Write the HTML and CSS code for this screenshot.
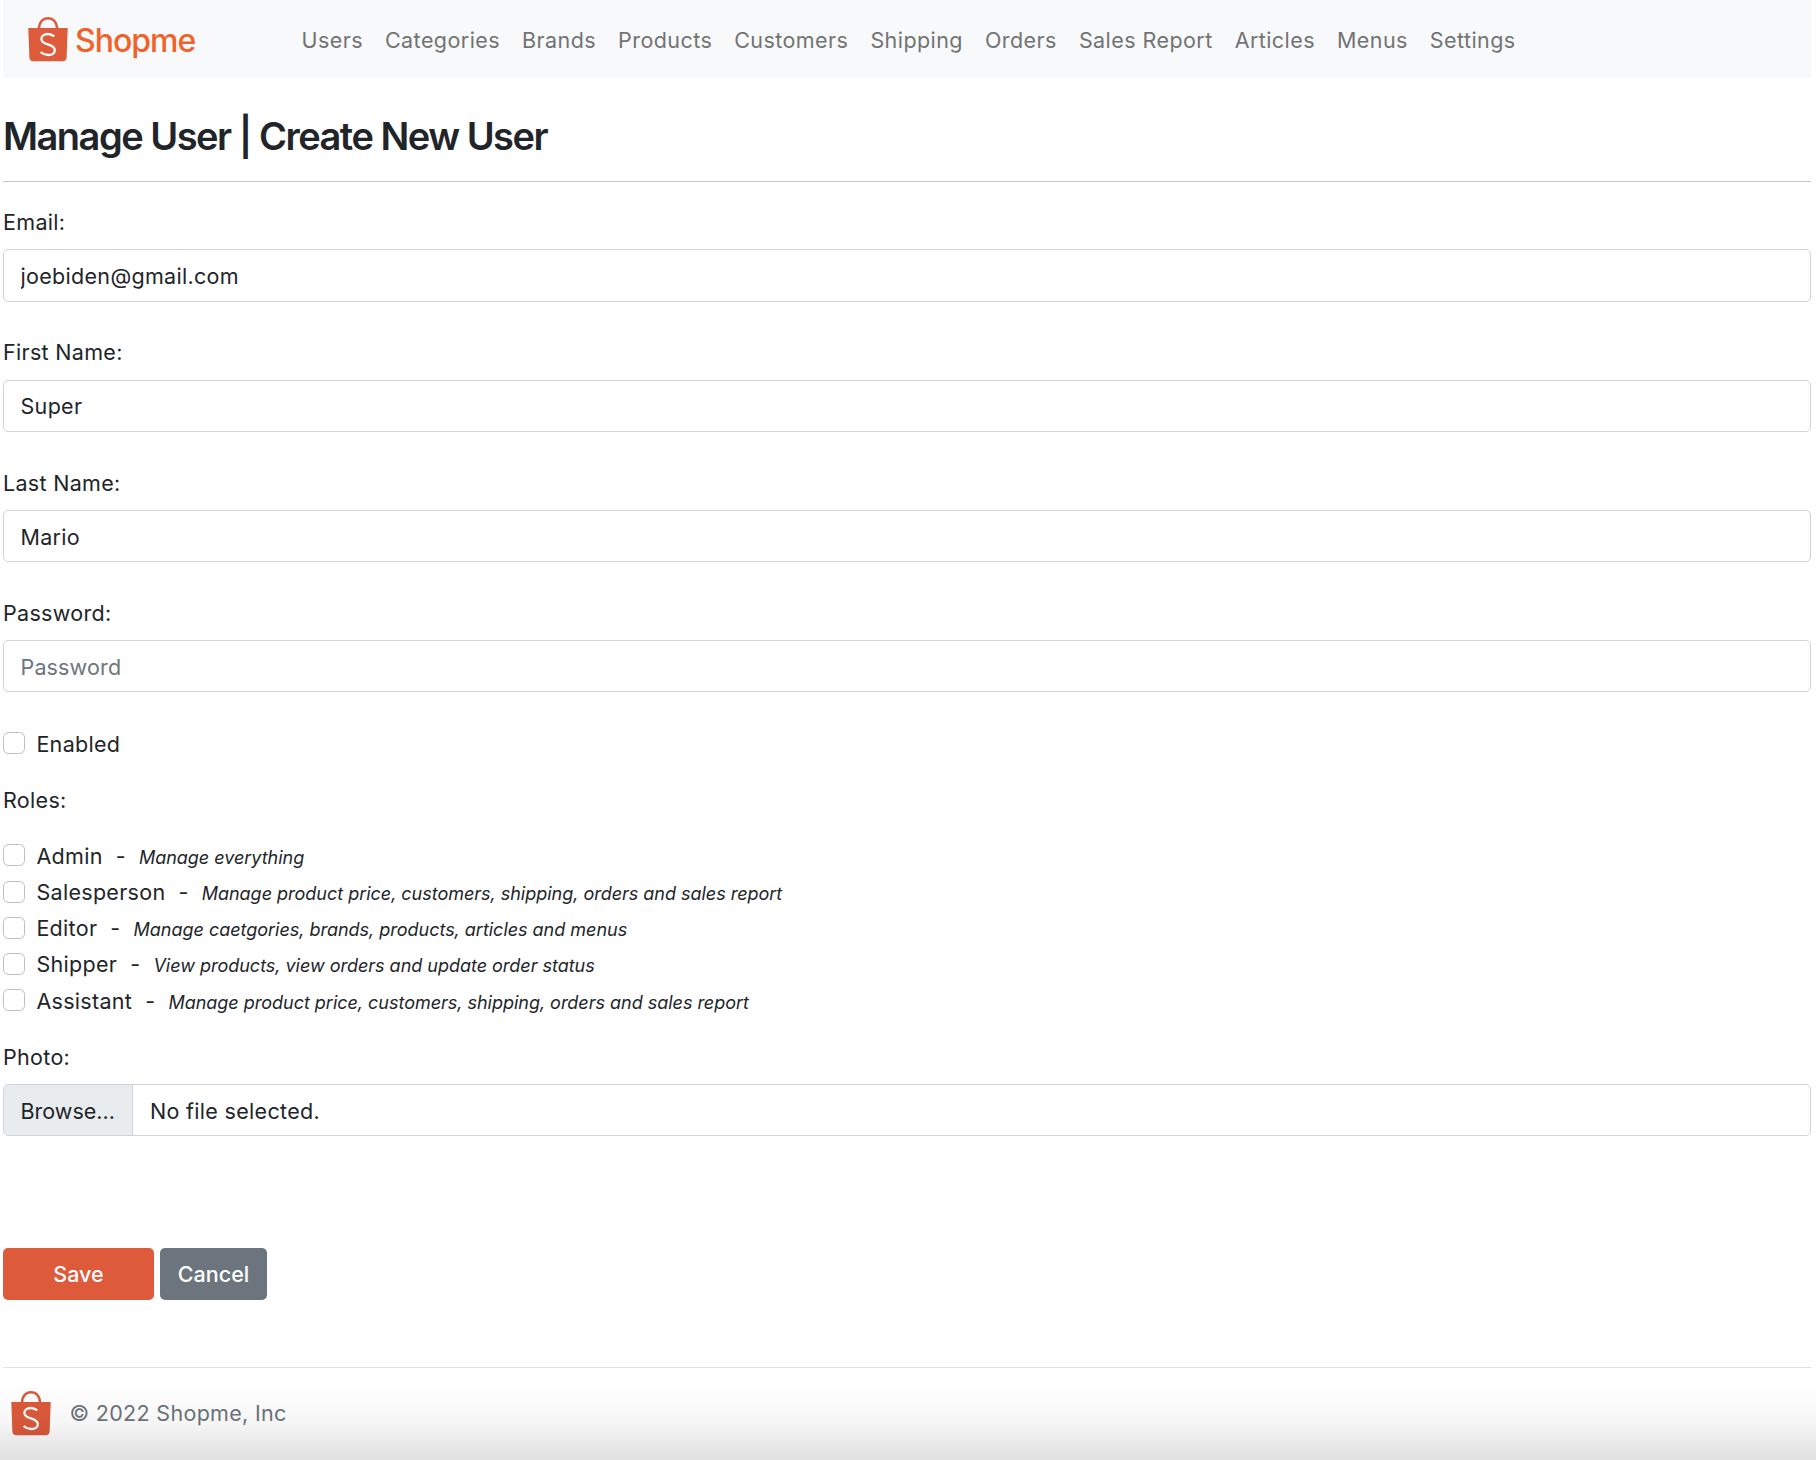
FILE: index.html
```html
<!DOCTYPE html>
<html lang="en">
<head>
<meta charset="utf-8">
<title>Manage User | Create New User</title>
<link rel="stylesheet" href="styles.css">
</head>
<body>
<svg class="symbols" width="0" height="0" aria-hidden="true">
  <symbol id="bag" viewBox="0 0 40 45">
    <path d="M0.3 11H39.7L38.6 40.5Q38.4 44.3 34.6 44.3H5.4Q1.6 44.3 1.4 40.5Z" fill="#dd5a3b"/>
    <path d="M11 12C11 5 15 1.3 20 1.3S29 5 29 12" fill="none" stroke="#dd5a3b" stroke-width="2.5"/>
    <path d="M26.3 19.4C24.3 17.9 22.3 17 19.8 17C16 17 13.4 19 13.4 21.9C13.4 24.9 16 26.2 19.9 27.4C24 28.7 26.8 30.2 26.8 33.2C26.8 36.2 24 38 20.3 38C17.3 38 14.8 37 12.6 35.2" fill="none" stroke="#fff" stroke-width="2.3"/>
  </symbol>
</svg>
<div class="page">
  <nav class="navbar">
    <a class="brand"><svg class="bag"><use href="#bag"/></svg><span class="brand-name">Shopme</span></a>
    <ul class="menu">
      <li>Users</li>
      <li>Categories</li>
      <li>Brands</li>
      <li>Products</li>
      <li>Customers</li>
      <li>Shipping</li>
      <li>Orders</li>
      <li>Sales Report</li>
      <li>Articles</li>
      <li>Menus</li>
      <li>Settings</li>
    </ul>
  </nav>
  <h2 class="title">Manage User | Create New User</h2>
  <form class="form">
    <div class="field"><label for="email">Email:</label><input id="email" class="control" type="text" value="joebiden@gmail.com"></div>
    <div class="field"><label for="first">First Name:</label><input id="first" class="control" type="text" value="Super"></div>
    <div class="field"><label for="last">Last Name:</label><input id="last" class="control" type="text" value="Mario"></div>
    <div class="field"><label for="pass">Password:</label><input id="pass" class="control" type="password" placeholder="Password"></div>
    <label class="check enabled"><input type="checkbox"><span>Enabled</span></label>
    <div class="roles-label">Roles:</div>
    <div class="roles">
      <label class="check"><input type="checkbox"><span>Admin</span><span class="dash">-</span><em>Manage everything</em></label>
      <label class="check"><input type="checkbox"><span>Salesperson</span><span class="dash">-</span><em>Manage product price, customers, shipping, orders and sales report</em></label>
      <label class="check"><input type="checkbox"><span>Editor</span><span class="dash">-</span><em>Manage caetgories, brands, products, articles and menus</em></label>
      <label class="check"><input type="checkbox"><span>Shipper</span><span class="dash">-</span><em>View products, view orders and update order status</em></label>
      <label class="check"><input type="checkbox"><span>Assistant</span><span class="dash">-</span><em>Manage product price, customers, shipping, orders and sales report</em></label>
    </div>
    <div class="field photo">
      <span>Photo:</span>
      <div class="file"><span class="browse">Browse...</span><span class="filename">No file selected.</span></div>
    </div>
    <div class="actions"><button type="button" class="btn save">Save</button><button type="button" class="btn cancel">Cancel</button></div>
  </form>
  <footer class="footer"><svg class="bag"><use href="#bag"/></svg><span>© 2022 Shopme, Inc</span></footer>
</div>
</body>
</html>
```
FILE: styles.css
```css
* { box-sizing: border-box; }
body {
  margin: 0;
  height: 1460px;
  overflow: hidden;
  background: #fff;
  color: #212529;
  font: 400 21.5px/33px Inter, "Liberation Sans", sans-serif;
  letter-spacing: 0.31px;
}
body::after {
  content: "";
  position: fixed;
  inset: auto 0 0;
  height: 76px;
  background: linear-gradient(rgba(0, 0, 0, 0), rgba(0, 0, 0, 0.035) 50%, rgba(0, 0, 0, 0.12));
  pointer-events: none;
}
.symbols { position: absolute; }
.page { margin: 0 5px 0 3px; }
.bag { width: 40px; height: 45px; flex: none; display: block; }

.navbar { display: flex; align-items: center; height: 78px; padding-left: 25px; background: #f8f9fa; }
.brand { display: flex; align-items: center; gap: 7px; width: 273.5px; }
.brand-name { padding-top: 2px; color: #f1622b; font-size: 32px; font-weight: 500; letter-spacing: -1px; }
.menu { display: flex; gap: 22px; margin: 0; padding: 2px 0 0; list-style: none; color: #727374; white-space: nowrap; letter-spacing: 0.43px; }

.title {
  margin: 0 0 24px;
  padding: 34px 0 21px;
  border-bottom: 1px solid #c7c8c9;
  font-size: 38px;
  line-height: 48px;
  font-weight: 600;
  letter-spacing: -1.5px;
}
.form { display: flex; flex-direction: column; }
.field { display: flex; flex-direction: column; gap: 10.3px; margin-bottom: 34.7px; }
.control, .file {
  height: 52.3px;
  border: 1px solid #ced4da;
  border-radius: 5px;
  background: #fff;
  color: inherit;
  font: inherit;
  letter-spacing: inherit;
  width: 100%;
}
.control { padding: 1px 17px 0 16.5px; }
.control::placeholder { color: #6c757d; opacity: 1; letter-spacing: 0.15px; }
.check { display: flex; align-items: center; height: 36.2px; }
.check input { appearance: none; flex: none; width: 22px; height: 22px; margin: 0 11.4px 2px 0; border: 1px solid #bfbfbf; border-radius: 5.5px; background: #fff; }
.enabled { margin-top: -1px; }
.dash { margin: 0 13px; }
.check em { padding-top: 2px; font-size: 18px; letter-spacing: -0.02px; }
.roles-label { margin: 22px 0 21px; }
.roles { margin-bottom: 21.5px; }
.photo { gap: 10px; }
.file { display: flex; overflow: hidden; line-height: 52px; }
.browse { width: 129px; padding-left: 16.5px; background: #e9ecef; border-right: 1px solid #ced4da; letter-spacing: 0; }
.filename { padding-left: 17px; }
.actions { display: flex; gap: 6px; margin-top: 77px; }
.btn { height: 52px; border: 0; border-radius: 5px; color: #fff; font: inherit; font-weight: 500; padding: 2px 0 0; letter-spacing: 0; }
.save { width: 151px; background: #dd5a3b; }
.cancel { width: 107px; background: #6c757d; }
.footer { display: flex; align-items: center; gap: 18.5px; margin-top: 67px; padding: 23px 0 0 8px; border-top: 1px solid #dfe0e1; color: #6c757d; }
```
